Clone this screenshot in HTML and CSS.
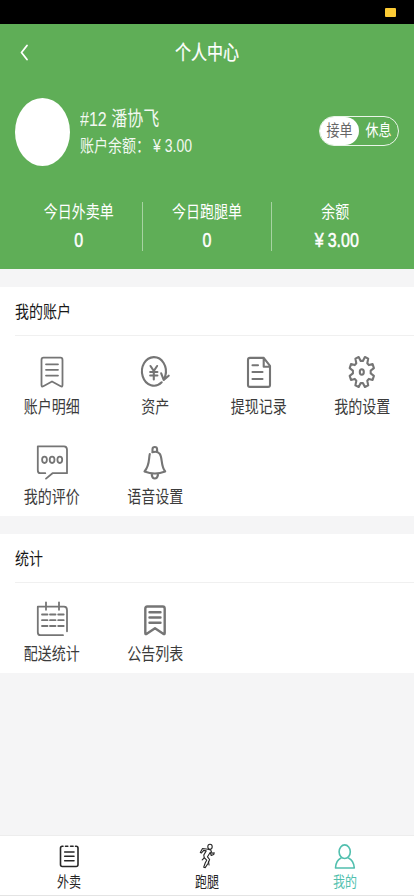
FILE: index.html
```html
<!DOCTYPE html>
<html lang="zh-CN">
<head>
<meta charset="utf-8">
<title>个人中心</title>
<link rel="stylesheet" href="styles.css">
</head>
<body>
<div class="status"><i class="battery"></i></div>
<header class="hero">
  <div class="nav">
    <svg class="back" viewBox="0 0 10 18"><path d="M8 2.500 2.500 9.500 8 16.500"/></svg>
    <h1 class="t">个人中心</h1>
  </div>
  <div class="profile">
    <div class="avatar"></div>
    <div class="who">
      <div class="name t">#12 潘协飞</div>
      <div class="balance t">账户余额：<span class="yen">¥</span>3.00</div>
    </div>
    <div class="toggle"><span class="on"><b class="t">接单</b></span><span class="off"><b class="t">休息</b></span></div>
  </div>
  <div class="stats">
    <div class="stat"><span class="t">今日外卖单</span><strong class="t">0</strong></div>
    <div class="stat"><span class="t">今日跑腿单</span><strong class="t">0</strong></div>
    <div class="stat"><span class="t">余额</span><strong class="t money"><span class="yen">¥</span>3.00</strong></div>
  </div>
</header>
<section class="panel">
  <h2><span class="t">我的账户</span></h2>
  <div class="grid">
    <div class="cell"><svg class="thin" viewBox="0 0 36 40"><path d="M9.500 5.700h17q2 0 2 2.200V33q0 2.200-1.800 1.200L18 29.500l-8.700 4.700q-1.800 1-1.800-1.200V7.900q0-2.200 2-2.200zM12 12.300h12M12 17.800h12M12 23.600h12"/></svg><span class="t">账户明细</span></div>
    <div class="cell"><svg viewBox="0 0 36 40"><path d="M24.700 30.300A12 14.300 0 1 1 28.300 24L26.700 28M24.200 21.300l2.500 6.700 5-4.300M13.500 14l3.300 5 3.300-5M16.800 19v8.500M13.200 20h7.200M13.200 23.500h7.200"/></svg><span class="t">资产</span></div>
    <div class="cell"><svg viewBox="0 0 36 40"><path d="M9 5.900h13.700l6.300 8v19q0 2-2 2H9q-2 0-2-2v-25q0-2 2-2zM22.700 5.900v8.800H29M11.500 13.300H17M11.500 20h10M11.500 27h10"/></svg><span class="t">提现记录</span></div>
    <div class="cell"><svg viewBox="0 0 36 40"><path transform="translate(17.800 20)" d="M8.900 1.400 12.100 3.900 10.800 7.900 7.100 6.900 5.500 8.800 6.400 13.400 3.100 15 1.100 11.100H-1.100L-3.100 15-6.400 13.400-5.500 8.800-7.100 6.900-10.800 7.900-12.100 3.900-8.900 1.400V-1.400L-12.100-3.900-10.800-7.900-7.100-6.900-5.500-8.800-6.400-13.400-3.100-15-1.100-11.100H1.100L3.100-15 6.400-13.400 5.500-8.800 7.100-6.900 10.800-7.900 12.100-3.900 8.900-1.400z"/><ellipse cx="17.800" cy="20" rx="2" ry="2.700"/></svg><span class="t">我的设置</span></div>
    <div class="cell"><svg class="thin" viewBox="0 0 36 40"><path d="M11.300 31.200H6.300q-2.500 0-2.500-3V4.300h26.200q3 0 3 3.500v23.400H18.500L12 36.600"/><ellipse cx="10.500" cy="17.800" rx="2.400" ry="3.200"/><ellipse cx="18.100" cy="17.800" rx="2.400" ry="3.200"/><ellipse cx="25.800" cy="17.800" rx="2.400" ry="3.200"/></svg><span class="t">我的评价</span></div>
    <div class="cell"><svg viewBox="0 0 36 40"><path d="M12.800 12C11.500 17 13 23 7.500 29.500Q17.800 33.500 28.200 29.500C23.500 23.500 25.700 16 22.800 11.800Q20.500 8.700 15.300 10.200M15.500 9.500V7.300q0-2.300 2.300-2.300t2.300 2.300v2.200M14.700 32.500q.6 4 3.100 4t3.300-4"/></svg><span class="t">语音设置</span></div>
  </div>
</section>
<section class="panel">
  <h2><span class="t">统计</span></h2>
  <div class="grid">
    <div class="cell"><svg class="thin" viewBox="0 0 36 40"><path d="M29 36.200H6.500q-2.700 0-2.700-3V7.700h26.200q3 0 3 3.500v21.100M12 3.300v7.500M25 3.300v7.500M8 15.500h5.500M16 15.500h5.500M24.200 15.500h5.500M8 21.200h5.500M16 21.200h5.500M24.200 21.200h5.500M8 27h5.500M16 27h5.500M24.200 27h5.500"/></svg><span class="t">配送统计</span></div>
    <div class="cell"><svg class="bold" viewBox="0 0 36 40"><path d="M10.300 7.500h15.400q2 0 2 2.200v24.200q0 2-1.500.8L18 29.300l-8.200 5.400q-1.500 1.200-1.500-.8V9.700q0-2.200 2-2.200zM12.500 13.300h11M12.500 18.500h11M12.500 23.700h11"/></svg><span class="t">公告列表</span></div>
  </div>
</section>
<nav class="tabs">
  <div class="tab"><svg viewBox="0 0 28 28"><path d="M8 4.200H7.300q-1.800 0-1.800 2V22.500q0 2 1.800 2H21.200q1.800 0 1.800-2V6.200q0-2-1.800-2H20.500M10.500 4.200h2.300M15.600 4.200h2.500M9.700 10h9.300M9.700 14.300h9.300M9.700 18.700h9.300"/></svg><span class="t">外卖</span></div>
  <div class="tab"><svg class="fine" viewBox="0 0 28 28"><ellipse cx="17" cy="4.700" rx="2.200" ry="2.500"/><path d="M15 7.200 9.500 6.500 7.300 10.500 8.500 11 10.700 8.400 13.200 8.900 10.800 13 11.200 15.700 13.700 18.200 12.300 20.800 10.700 25.300 12.200 25.600 15 21.500 16.600 17.500 14.500 14.800 17.300 10.300 18.200 13.500 20.700 12.500 21.200 10.800 19 11.200 17.700 7.900z"/><path d="M11.200 16 9.200 17.800M15.500 19.500l.5 3.500"/></svg><span class="t">跑腿</span></div>
  <div class="tab active"><svg viewBox="0 0 28 28"><ellipse cx="13.700" cy="9.700" rx="5.600" ry="6.800"/><path d="M10 16Q4.800 18.500 4.500 26H23.300Q22.800 18.500 17.500 16"/></svg><span class="t">我的</span></div>
</nav>
</body>
</html>
```
FILE: styles.css
```css
* { box-sizing: border-box; margin: 0; padding: 0; }
body {
  width: 414px; height: 896px; display: flex; flex-direction: column;
  background: #f5f5f6; overflow: hidden;
  font-family: "Liberation Sans", "Noto Sans CJK SC", sans-serif;
  font-size: 14px; line-height: 20px; color: #333;
}
svg { display: block; fill: none; stroke: currentColor; stroke-width: 2.1; stroke-linecap: round; stroke-linejoin: round; }
/* tall, condensed lettering */
.t { display: block; transform: scaleY(1.25); white-space: nowrap; font-weight: 400; }
.status { height: 24px; background: #000; display: flex; justify-content: flex-end; padding: 8px 18px 0 0; }
.battery { width: 11px; height: 9px; background: #fccb35; border-radius: 1px; }
.hero { height: 245px; background: #5fae57; color: #fff; }
.nav { height: 56px; display: grid; grid-template-columns: 60px 1fr 60px; align-items: center; }
.back { width: 10px; height: 18px; margin-left: 19px; stroke-width: 1.8; }
h1 { font-size: 16px; line-height: 24px; text-align: center; padding-top: 2px; -webkit-text-stroke: .2px #fff; }
.profile { display: flex; height: 104px; align-items: center; padding: 0 15px; }
.avatar { width: 55px; height: 68px; border-radius: 50%; background: #fff; }
.who { flex: 1; padding: 2px 0 0 10px; color: #f2f8f1; }
.name { font-size: 16px; line-height: 26px; }
.balance { line-height: 26px; font-size: 14px; }
.yen { display: inline-block; margin-right: 3px; }
.balance .yen { margin: 0 4px 0 3px; }
.toggle { width: 80px; height: 30px; border: 1px solid #e9f5e8; border-radius: 15px; display: flex; margin-top: -3px; font-size: 13px; }
.toggle span { flex: 1; display: flex; align-items: center; justify-content: center; }
.toggle .on { background: #fff; color: #666; border-radius: 14px; }
.stats { display: flex; padding: 18px 15px 0; }
.stat { flex: 1; height: 49px; text-align: center; }
.stat + .stat { border-left: 1px solid #a7d3a2; }
.stat strong.t { font-size: 16px; line-height: 24px; margin-top: 7px; -webkit-text-stroke: .4px #fff; }
.stat .money { padding-left: 3px; }
.money .yen { margin-right: 4px; }
.panel { background: #fff; margin-top: 18px; padding-bottom: 10px; }
h2 { height: 49px; margin-left: 15px; padding-top: 2px; border-bottom: 1px solid #f0f0f0; display: flex; align-items: center; font-size: 14px; line-height: 20px; color: #181818; }
.grid { display: grid; grid-template-columns: repeat(4, 1fr); padding-top: 16px; row-gap: 26px; }
.cell { height: 64px; display: flex; flex-direction: column; align-items: center; color: #757575; }
.cell svg { width: 36px; height: 40px; flex: none; }
.cell svg.thin { stroke-width: 1.8; }
.cell svg.bold { stroke-width: 2.4; }
.cell .t { margin-top: 5px; color: #3b3b3b; }
.tabs { margin-top: auto; height: 61px; background: #fff; border-top: 1px solid #ededed; border-bottom: 1px solid #e4e4e4; display: flex; padding-top: 6px; color: #262626; }
.tab { flex: 1; display: flex; flex-direction: column; align-items: center; font-size: 12px; line-height: 18px; }
.tab svg { width: 28px; height: 28px; stroke-width: 1.6; }
.tab svg.fine { stroke-width: 1.1; }
.tab .t { margin-top: 3px; }
.active { color: #51bfae; }
```
